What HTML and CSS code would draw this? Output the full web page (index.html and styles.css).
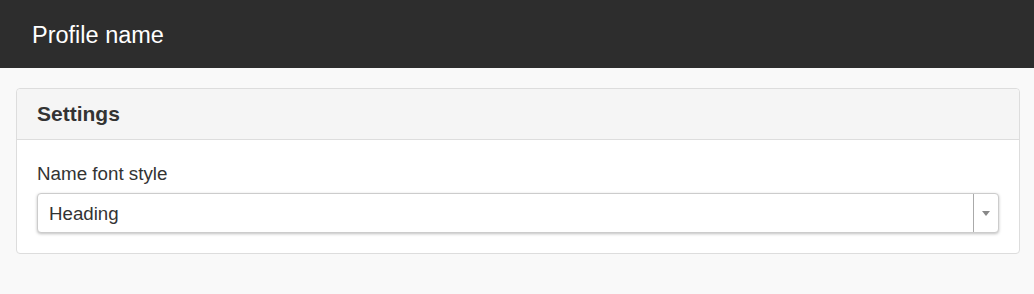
FILE: index.html
```html
<!DOCTYPE html>
<html>
<head>
<meta charset="utf-8">
<link rel="stylesheet" href="styles.css">
</head>
<body>
<header class="topbar"><h1 class="title">Profile name</h1></header>
<main class="content">
  <section class="panel">
    <div class="panel-heading">Settings</div>
    <div class="panel-body">
      <label class="field-label">Name font style</label>
      <div class="select">
        <span class="select-value">Heading</span>
        <span class="select-arrow"><span class="caret"></span></span>
      </div>
    </div>
  </section>
</main>
</body>
</html>
```
FILE: styles.css
```css
html, body { margin: 0; padding: 0; }
body {
  background: #f9f9f9;
  font-family: "Liberation Sans", Arial, sans-serif;
  color: #333;
  width: 1034px;
  height: 294px;
  overflow: hidden;
}
.topbar {
  background: #2d2d2d;
  height: 68px;
  display: flex;
  align-items: center;
  padding-left: 32px;
}
.title {
  margin: 0;
  color: #fff;
  font-size: 23.5px;
  font-weight: normal;
  line-height: 28px;
  padding-top: 2px;
}
.content { padding: 20px 15px 0 16px; }
.panel {
  background: #fff;
  border: 1px solid #ddd;
  border-radius: 4px;
  box-sizing: border-box;
  width: 1004px;
}
.panel-heading {
  background: #f5f5f5;
  border-bottom: 1px solid #ddd;
  border-radius: 4px 4px 0 0;
  height: 51px;
  box-sizing: border-box;
  display: flex;
  align-items: center;
  padding: 0 20px 1px;
  font-size: 21px;
  font-weight: bold;
  color: #333;
}
.panel-body { padding: 23px 20px 20px; }
.field-label {
  display: block;
  font-size: 18.8px;
  line-height: 22px;
  color: #333;
  margin-bottom: 8px;
}
.select {
  height: 40px;
  box-sizing: border-box;
  border: 1px solid #ccc;
  border-radius: 4px;
  box-shadow: 0 1px 3px rgba(0,0,0,0.25);
  display: flex;
  align-items: center;
  background: #fff;
}
.select-value {
  flex: 1;
  padding-left: 11px;
  padding-top: 2px;
  font-size: 18.7px;
  color: #333;
}
.select-arrow {
  width: 24px;
  align-self: stretch;
  border-left: 1px solid #aaa;
  display: flex;
  align-items: center;
  justify-content: center;
}
.caret {
  width: 0; height: 0;
  border-left: 4px solid transparent;
  border-right: 4px solid transparent;
  border-top: 5px solid #888;
}
```
